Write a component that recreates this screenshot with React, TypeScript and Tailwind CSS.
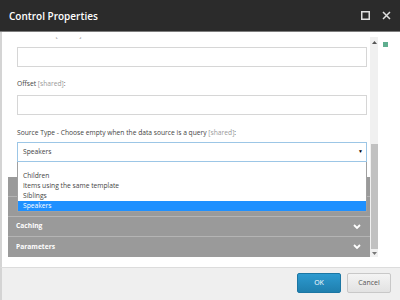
import React from "react";

const Chevron = () => (
  <svg width="8" height="6" viewBox="0 0 8 6" className="block">
    <polyline points="1,1 4,4 7,1" fill="none" stroke="#ffffff" strokeWidth="1.8" />
  </svg>
);

export default function App() {
  return (
    <div className="w-[400px] h-[300px] flex flex-col overflow-hidden bg-white" style={{ fontFamily: '"Open Sans", sans-serif' }}>
      {/* Title bar */}
      <div className="h-[32px] shrink-0 bg-[#2b2b2b] border-b border-[#7d7d7d] flex items-center justify-between pl-[9px] pr-[9px]">
        <span className="text-white text-[10px] font-semibold leading-none">Control Properties</span>
        <div className="flex items-center gap-[12px]">
          <svg width="9" height="9" viewBox="0 0 9 9" className="block">
            <rect x="0.75" y="0.75" width="7.5" height="7.5" fill="none" stroke="#e0e0e0" strokeWidth="1.5" />
          </svg>
          <svg width="9" height="9" viewBox="0 0 9 9" className="block">
            <path d="M1 1 L8 8 M8 1 L1 8" stroke="#e0e0e0" strokeWidth="1.5" />
          </svg>
        </div>
      </div>

      {/* Body */}
      <div className="flex-1 flex border-l-[2px] border-[#d4d4d4] pl-[1px] pt-[5px] pb-[9px] min-h-0">
        {/* viewport */}
        <div className="w-[367px] h-[220px] overflow-hidden relative">
          <div className="mt-[-8px] pl-[14px] pr-[3px] text-[6.7px] text-[#444]">
            <div className="h-[12px] leading-[12px]">Placeholder <span className="text-[#999]">[shared]</span>:</div>
            <div className="mt-[6px] h-[20px] border border-[#d6d6d6] bg-white" />
            <div className="mt-[11px] h-[12px] leading-[12px]">Offset <span className="text-[#999]">[shared]</span>:</div>
            <div className="mt-[5px] h-[20px] border border-[#d6d6d6] bg-white" />
            <div className="mt-[12px] h-[12px] leading-[12px]">
              Source Type - Choose empty when the data source is a query <span className="text-[#999]">[shared]</span>:
            </div>
            <div className="mt-[3px] relative z-10">
              <div className="h-[20px] border border-[#9cc6e6] bg-white flex items-center justify-between pl-[5px] pr-[3px]">
                <span>Speakers</span>
                <span className="text-[5px] text-black">▼</span>
              </div>
              <div className="absolute top-full left-0 right-0 bg-white border border-[#a0a0a0] border-t-0 pt-[9px] text-[#444]">
                <div className="h-[10px] leading-[10px] pl-[5px]">Children</div>
                <div className="h-[10px] leading-[10px] pl-[5px]">Items using the same template</div>
                <div className="h-[10px] leading-[10px] pl-[5px]">Siblings</div>
                <div className="h-[10px] leading-[10px] pl-[5px] bg-[#1e90ff] text-white">Speakers</div>
              </div>
            </div>
          </div>
          {/* accordion panel */}
          <div className="mt-[15px] ml-[5px] bg-[#9a9a9a] text-white text-[6.7px] font-bold">
            <div className="h-[20px] border-b border-[#b4b4b4]" />
            <div className="h-[20px] border-b border-[#b4b4b4]" />
            <div className="h-[20px] border-b border-[#b4b4b4] flex items-center justify-between pl-[8px] pr-[9px]">
              <span>Caching</span>
              <Chevron />
            </div>
            <div className="h-[20px] flex items-center justify-between pl-[8px] pr-[9px]">
              <span>Parameters</span>
              <Chevron />
            </div>
          </div>
        </div>
        {/* scrollbar */}
        <div className="w-[8px] h-[220px] bg-[#f0f0f0] flex flex-col items-center">
          <div className="h-[10px] flex items-center">
            <svg width="5" height="3" viewBox="0 0 5 3" className="block"><polygon points="0,3 2.5,0 5,3" fill="#555" /></svg>
          </div>
          <div className="mt-[97px] w-[7px] h-[105px] bg-[#c1c1c1]" />
          <div className="h-[8px] flex items-center">
            <svg width="5" height="3" viewBox="0 0 5 3" className="block"><polygon points="0,0 2.5,3 5,0" fill="#777" /></svg>
          </div>
        </div>
        {/* right column */}
        <div className="flex-1 pl-[5px] pt-[5px]">
          <div className="w-[5px] h-[5px] bg-[#5fae8f]" />
        </div>
      </div>

      {/* Footer */}
      <div className="h-[33px] shrink-0 bg-[#efefef] border-t border-[#dcdcdc] border-l-[2px] border-l-[#d4d4d4] flex items-start pt-[5px] justify-end gap-[6px] pr-[9px]">
        <button className="w-[44px] h-[20px] rounded-[2px] bg-gradient-to-b from-[#2d9ad0] to-[#1f7fae] text-white text-[7px] border border-[#1b76a3]">OK</button>
        <button className="w-[44px] h-[20px] rounded-[2px] bg-gradient-to-b from-[#f4f4f4] to-[#e2e2e2] text-[#555] text-[7px] border border-[#c8c8c8]">Cancel</button>
      </div>
    </div>
  );
}
